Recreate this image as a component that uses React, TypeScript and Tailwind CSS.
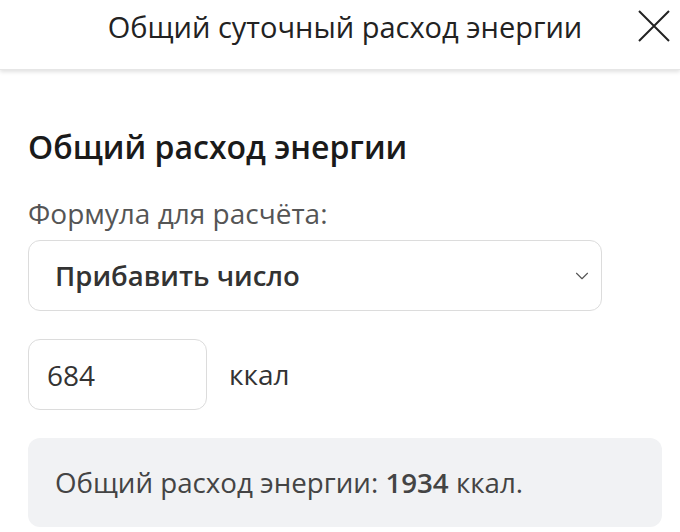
import { ChevronDown } from 'lucide-react';

export default function App() {
    return (
        <div className="w-[680px] h-[532px] overflow-hidden bg-white" style={{ fontFamily: '"Open Sans", "Noto Sans", sans-serif' }}>
            <header className="relative h-[70px] flex items-start justify-center pt-[7px] pl-[10px] shadow-[0_2px_4px_rgba(0,0,0,0.12)] border-b border-[#e6e6e6]">
                <h1 className="text-[29px] leading-[40px] text-[#222] font-normal">Общий суточный расход энергии</h1>
                <button className="absolute right-[10px] top-[10px] w-[32px] h-[32px] text-[#222]">
                    <svg viewBox="0 0 32 32" width="32" height="32" fill="none" stroke="currentColor" strokeWidth="2">
                        <path d="M1 1 L31 31 M31 1 L1 31" />
                    </svg>
                </button>
            </header>

            <main className="px-[28px] pt-[57px]">
                <h2 className="text-[32px] font-semibold text-[#1a1a1a] leading-[40px]">Общий расход энергии</h2>

                <div className="mt-[28px] text-[28px] text-[#555] leading-[36px]">Формула для расчёта:</div>

                <div className="mt-[9px] w-[574px] h-[71px] border border-[#dcdcdc] rounded-[12px] flex items-center justify-between pl-[26px] pr-[8px]">
                    <span className="text-[27.5px] font-semibold text-[#333]">Прибавить число</span>
                    <ChevronDown size={22} strokeWidth={1.2} className="text-[#555]" />
                </div>

                <div className="mt-[28px] flex items-start gap-[22px]">
                    <div className="w-[179px] h-[71px] border border-[#dcdcdc] rounded-[12px] flex items-center pl-[18px]">
                        <span className="text-[28px] text-[#333]">684</span>
                    </div>
                    <span className="text-[28px] text-[#333] mt-[14px]">ккал</span>
                </div>

                <div className="mt-[28px] w-[634px] h-[89px] bg-[#f1f2f4] rounded-[12px] flex items-center pl-[27px]">
                    <span className="text-[27.7px] text-[#444]">
                        Общий расход энергии: <span className="font-semibold">1934</span> ккал.
                    </span>
                </div>
            </main>
        </div>
    );
}
